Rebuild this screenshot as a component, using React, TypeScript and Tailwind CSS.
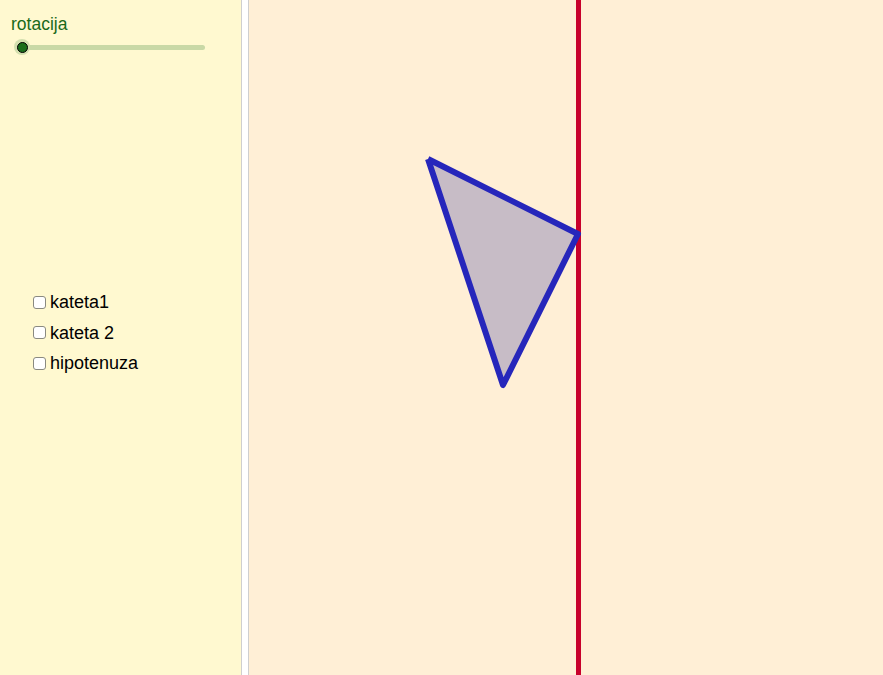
import React from "react";

export default function App() {
  const font = { fontFamily: '"Liberation Sans", Arial, sans-serif' };
  const items = ["kateta1", "kateta 2", "hipotenuza"];
  return (
    <div className="flex h-[675px] w-[883px] overflow-hidden" style={font}>
      <div className="w-[241px] shrink-0 bg-[#fff9d0] flex flex-col">
        <div className="pl-[11px] pt-[14px] text-[17.5px] leading-[21px] text-[#1a6a1a]">rotacija</div>
        <div className="relative ml-[17px] mt-[7px] h-[10px] w-[188px] flex items-center">
          <div className="h-[5px] w-full rounded-full bg-[#c9d9a6]" />
          <div className="absolute left-[-3px] top-[-3px] h-[16px] w-[16px] rounded-full bg-[#d3dfae] flex items-center justify-center">
            <div className="h-[11px] w-[11px] rounded-full bg-[#1c6e1c] border border-black" />
          </div>
        </div>
        <div className="mt-[240px] pl-[33px] flex flex-col gap-[10.5px]">
          {items.map((t) => (
            <label key={t} className="flex items-center h-[20px] text-[18px] text-black leading-[20px]">
              <span className="h-[13px] w-[13px] rounded-[3px] border border-[#8a8a80] bg-white mr-[4px]" />
              {t}
            </label>
          ))}
        </div>
      </div>
      <div className="w-px bg-[#cfcfcf] shrink-0" />
      <div className="w-[6px] bg-white shrink-0" />
      <div className="w-px bg-[#cfcfcf] shrink-0" />
      <div className="flex-1 bg-[#ffefd6] relative">
        <svg className="absolute inset-0" width="634" height="675" viewBox="249 0 634 675">
          <polygon points="428,159 578,234 503,385" fill="#c7bcc6" />
          <line x1="578.5" y1="0" x2="578.5" y2="675" stroke="#c8002b" strokeWidth="5" />
          <polyline points="428,159 578,234 503,385 428,159" fill="none" stroke="#2626bb" strokeWidth="6" strokeLinejoin="round" />
        </svg>
      </div>
    </div>
  );
}
